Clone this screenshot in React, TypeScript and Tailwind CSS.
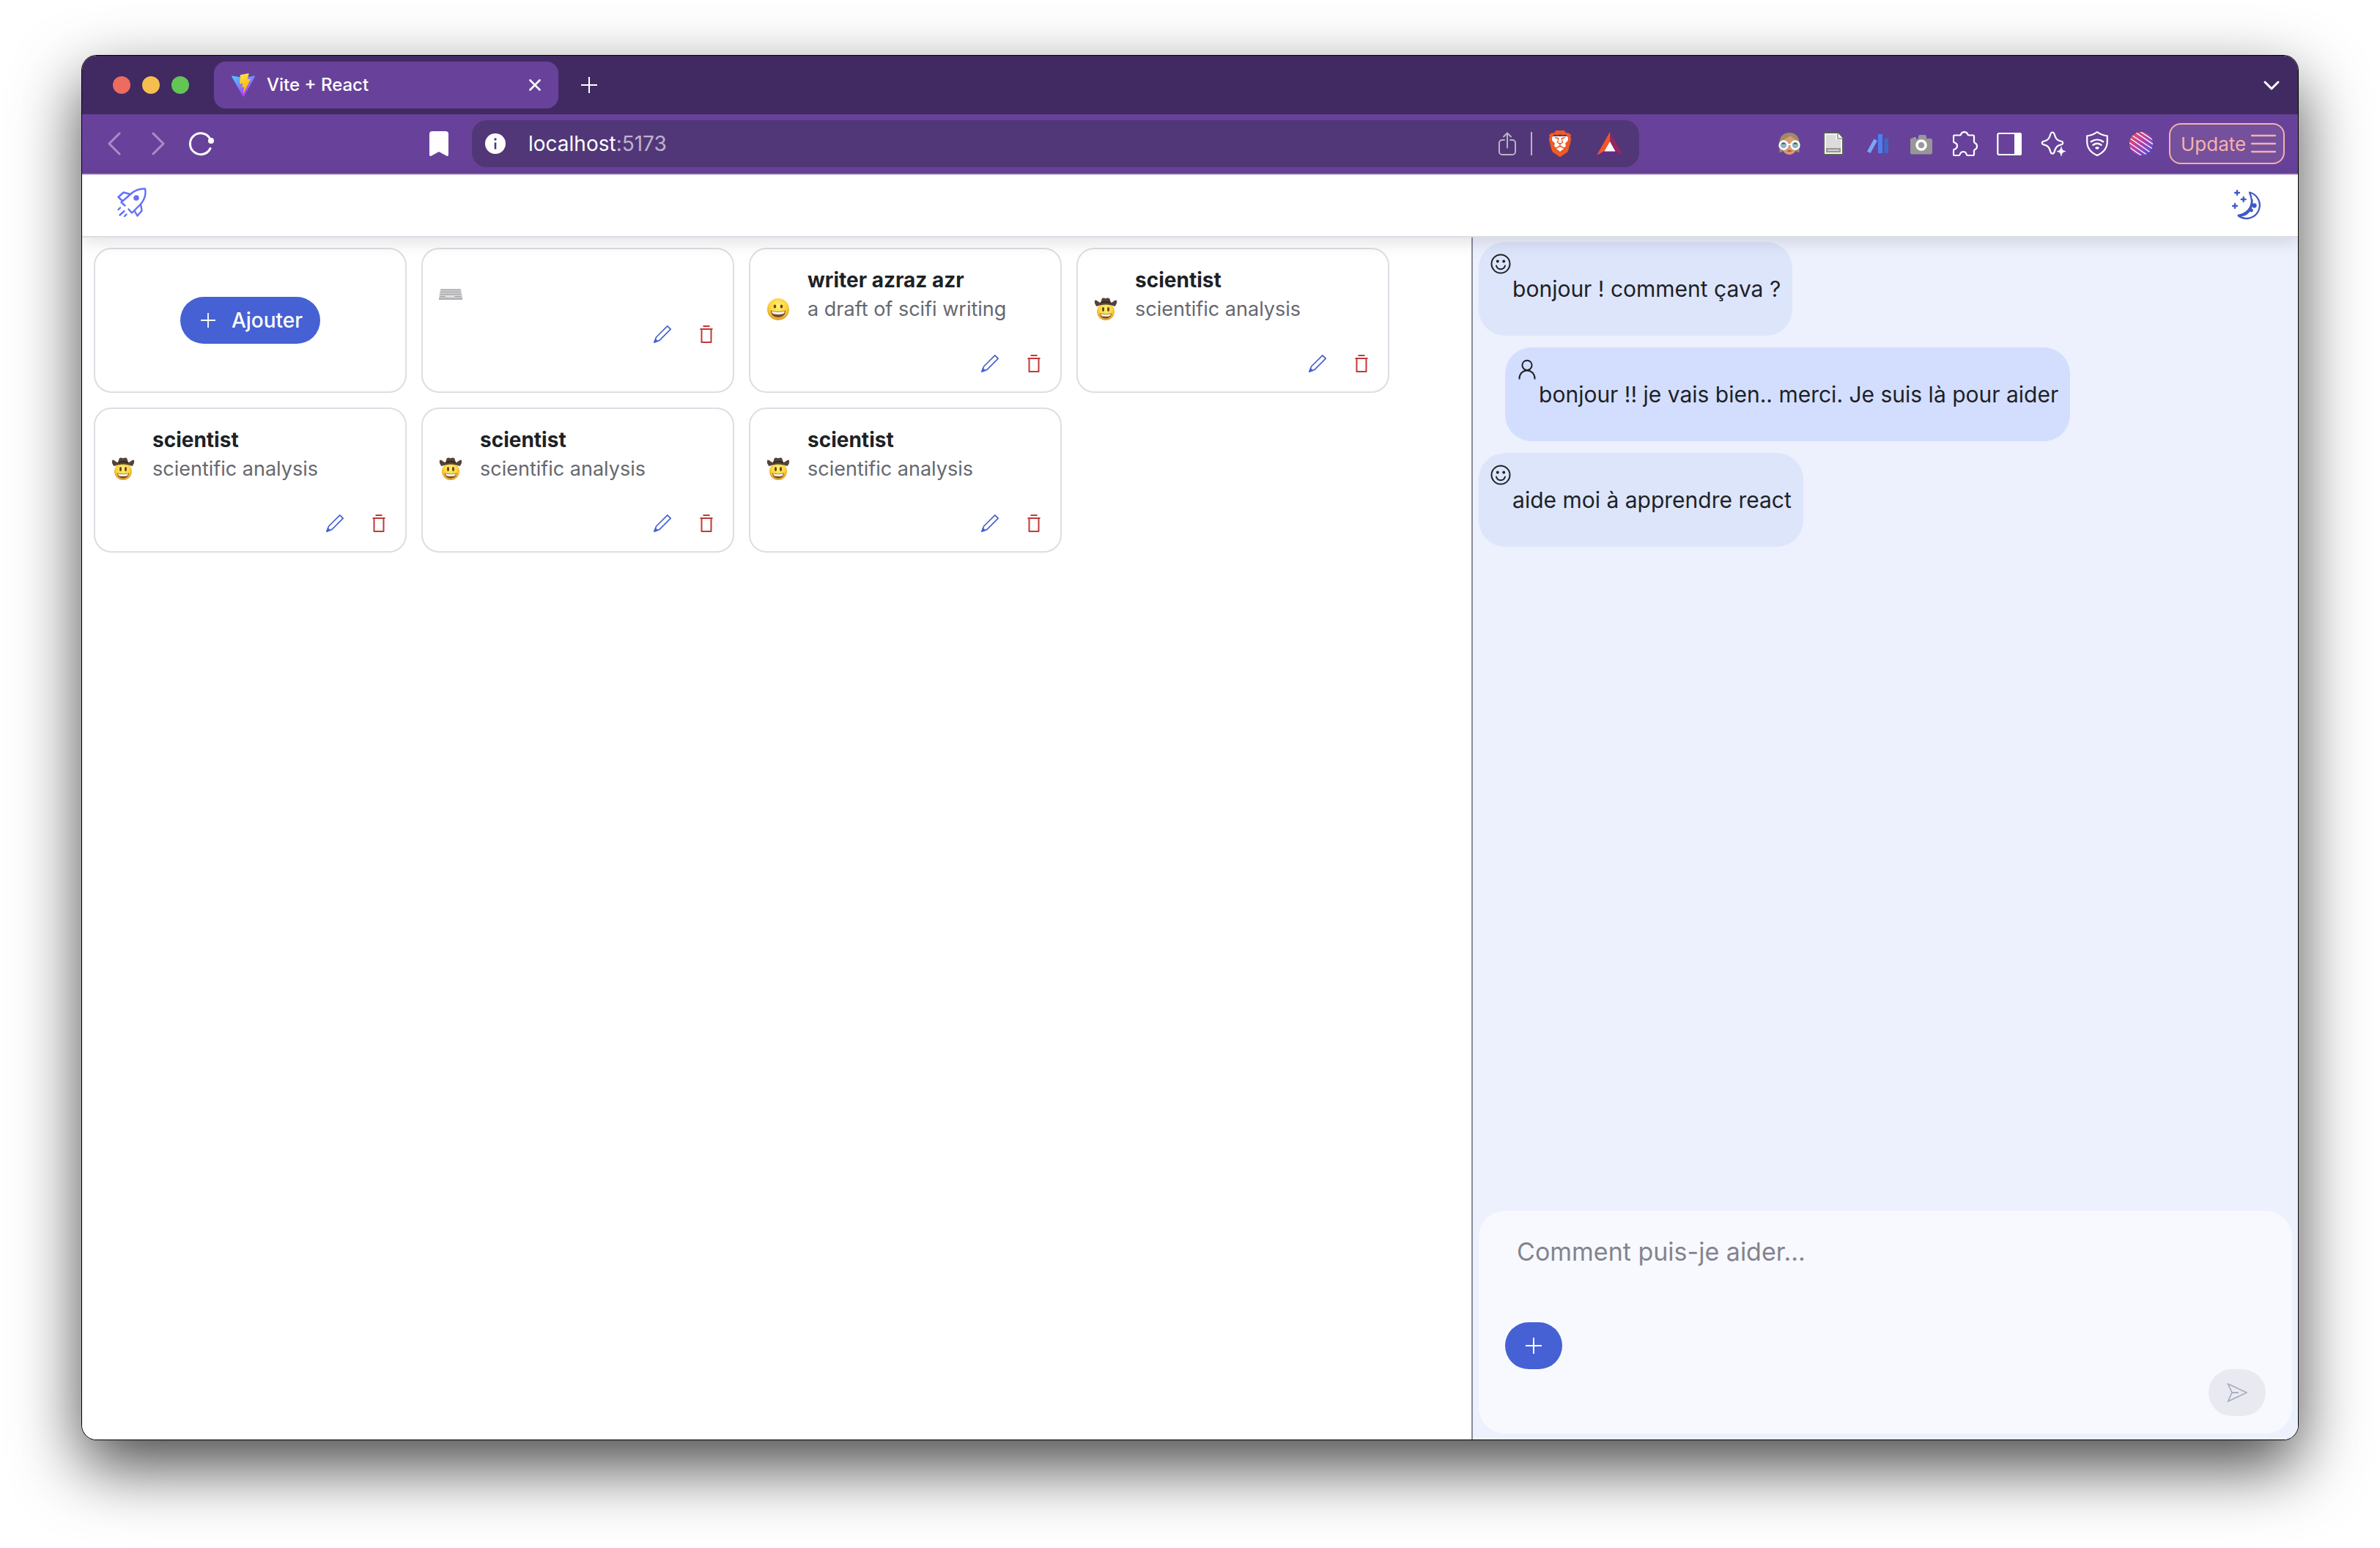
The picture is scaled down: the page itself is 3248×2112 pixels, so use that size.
import type { ReactNode } from "react";
import { SiBrave } from "react-icons/si";

type IconProps = { className?: string };

function ViteLogo() {
  return (
    <svg className="size-8" viewBox="0 0 32 32" aria-hidden="true">
      <defs>
        <linearGradient id="vite-a" x1="0" y1="0" x2="0.6" y2="1">
          <stop offset="0" stopColor="#41d1ff" />
          <stop offset="1" stopColor="#bd34fe" />
        </linearGradient>
        <linearGradient id="vite-b" x1="0.4" y1="0" x2="0.6" y2="1">
          <stop offset="0" stopColor="#ffea83" />
          <stop offset="0.1" stopColor="#ffdd35" />
          <stop offset="1" stopColor="#ffa800" />
        </linearGradient>
      </defs>
      <path fill="url(#vite-a)" d="M31.9 4.6 17 31.3c-.3.6-1.2.6-1.5 0L.2 4.6c-.3-.6.2-1.3.9-1.2L16.100 6.100h.3L31 3.400c.7-.1 1.200.6.900 1.200Z" />
      <path fill="url(#vite-b)" d="m23.200 0-11 2.200c-.2 0-.3.2-.3.400l-.7 11.500c0 .3.200.5.500.400l3.100-.7c.3-.1.500.2.500.5l-.9 4.500c-.1.300.2.600.5.500l1.900-.6c.3-.1.600.200.500.5l-1.400 7c-.1.400.5.700.700.300l.2-.2 9-18c.2-.3-.1-.6-.4-.6l-3.200.6c-.3.100-.6-.2-.5-.5l2-7.200c.1-.3-.2-.6-.5-.6Z" />
    </svg>
  );
}

function FaceIcon() {
  return (
    <svg className="size-8" viewBox="0 0 32 32" aria-hidden="true">
      <path d="M2.500 28V15C2.500 6 8 1 16 1s13.500 5 13.500 14v13l-4-1-2-8h-15l-2 8Z" fill="#a08a63" />
      <path d="M5 14c0-3 6-4 11-8 3-1 5 3 9 5 2 1 2 3 2 5 0 9-5 15-11 15S5 25 5 16Z" fill="#d79b76" />
      <path d="M12 26c2-1.500 6-1.500 8 0-2 1.500-6 1.500-8 0Z" fill="#b1573f" />
      <circle cx="8" cy="18" r="5.500" fill="#8fb5c0" stroke="#fff" strokeWidth="2.400" />
      <circle cx="24" cy="18" r="5.500" fill="#8fb5c0" stroke="#fff" strokeWidth="2.400" />
      <path d="M5 16.500a3.500 3.500 0 0 1 6 0ZM21 16.500a3.500 3.500 0 0 1 6 0Z" fill="#2f5966" />
      <path d="M13 17h6" stroke="#fff" strokeWidth="2" />
    </svg>
  );
}

function DocumentIcon() {
  return (
    <svg className="size-8" viewBox="0 0 32 32" aria-hidden="true">
      <path d="M3 1h19l7 7v23H3Z" fill="#f4f4f4" stroke="#5d5d5d" strokeWidth="2" />
      <path d="M6 4h13v6h7v18H6Z" fill="#dcdcdc" />
      <path d="M22 1v8h7" fill="#fff" stroke="#5d5d5d" strokeWidth="1" />
      <path d="M6 22h20v6H6Z" fill="#969696" />
      <path d="M8 24h16v2H8Z" fill="#cfcfcf" />
    </svg>
  );
}

function BarsIcon() {
  return (
    <svg className="size-8" viewBox="0 0 32 32" aria-hidden="true">
      <path d="M11.500 9.500 16 12 6.500 29 2 26.500Z" fill="#7ba6f7" />
      <path d="M17 3h6v26h-6Z" fill="#4a80f0" />
      <path d="M25.500 9H31v20h-5.500Z" fill="#3c68c8" />
    </svg>
  );
}

function CameraIcon() {
  return (
    <svg className="size-8" viewBox="0 0 32 32" aria-hidden="true">
      <path d="M4 8.500h-1a2 2 0 0 0-2 2V28a2.500 2.500 0 0 0 2.500 2.500h25A2.500 2.500 0 0 0 31 28V11.500A2.500 2.500 0 0 0 28.500 9H23V6.500A2.500 2.500 0 0 0 20.500 4h-6A2.500 2.500 0 0 0 12 6.500V9l-3 1V7H6Z" fill="#979797" />
      <circle cx="16" cy="18" r="6" fill="#999" stroke="#fff" strokeWidth="3.500" />
    </svg>
  );
}

function PuzzleIcon() {
  return (
    <svg className="h-[34px] w-[34px]" viewBox="0 0 34 34" fill="none" stroke="#fff" strokeWidth="2.200" aria-hidden="true">
      <path d="M2.500 5.500H10C11 5.500 11 4.800 11.300 4 12 1.800 13.600 1.200 15.600 1.200S19.500 1.800 20.200 4C20.500 4.800 20.800 5.500 21.600 5.500H27.500Q29 5.500 29 7V14.500C29 15.800 30 16 31 16.500 32.600 17.300 33 18.800 33 20.600S32.400 24 31 24.700C30 25.200 29 25.600 29 26.600V31.500Q29 33 27.500 33H20C19 33 18.800 32 18.500 31 17.900 29 16.500 28 14.500 28S10.700 29 10 31C9.700 32 9.400 33 8.400 33H2.500Q1 33 1 31.500V26C1 25 2 24.800 3 24.400 5 23.600 6 22 6 20S5 16.600 3 15.800C2 15.400 1 15 1 14V7Q1 5.500 2.500 5.500Z" />
    </svg>
  );
}

function SidebarIcon() {
  return (
    <svg className="h-[34px] w-[34px]" viewBox="0 0 34 34" aria-hidden="true">
      <rect x="1.300" y="3" width="31.500" height="29" rx="2" fill="none" stroke="#fff" strokeWidth="2.200" />
      <path d="M24 2h7.500A2.500 2.500 0 0 1 34 4.500v26a2.500 2.500 0 0 1-2.500 2.500H24Z" fill="#fff" />
    </svg>
  );
}

function SparkleIcon() {
  return (
    <svg className="h-[34px] w-[34px]" viewBox="0 0 34 34" aria-hidden="true">
      <path d="M16 1.500c1.800 0 2.300 1.200 2.800 3 1.200 4.300 2.300 6.300 4.700 7.600 1.700 1 3.200 1.200 5 1.800 2.300.700 2.300 3.400 0 4.200-1.800.6-3.300.9-5 1.900-2.400 1.300-3.500 3.300-4.700 7.600-.5 1.800-1 3-2.800 3s-2.300-1.200-2.800-3c-1.200-4.300-2.300-6.300-4.700-7.600-1.700-1-3.200-1.300-5-1.900-2.300-.8-2.300-3.500 0-4.200 1.800-.6 3.300-.8 5-1.800 2.400-1.300 3.500-3.300 4.700-7.600.5-1.800 1-3 2.800-3Z" fill="none" stroke="#fff" strokeWidth="2.200" />
      <path d="M28 21c.8 4.300 2 5.500 6 6.500-4 1-5.200 2.200-6 6.500-.8-4.300-2-5.500-6-6.500 4-1 5.200-2.200 6-6.500Z" fill="#fff" stroke="#fff" strokeWidth="0.600" />
    </svg>
  );
}

function ShieldIcon() {
  return (
    <svg className="h-[34px] w-[34px]" viewBox="0 0 34 34" fill="none" stroke="#fff" strokeWidth="2.200" aria-hidden="true">
      <path d="M17 1.200C13 4 8 6 3.200 6.500V14c0 9.500 5.800 15.500 13.800 19 8-3.500 13.800-9.500 13.800-19V6.500C26 6 21 4 17 1.200Z" />
      <g strokeLinecap="round" strokeWidth="2.400">
        <path d="M8.800 14.300c5-3.600 11.400-3.600 16.400 0M11.500 18.800c3.400-2.600 7.600-2.600 11 0" />
        <path d="M16 22.800h2" strokeWidth="3.200" />
      </g>
    </svg>
  );
}

function StripedIcon() {
  return (
    <svg className="size-8" viewBox="0 0 32 32" aria-hidden="true">
      <defs>
        <linearGradient id="striped" x1="0" y1="0" x2="1" y2="1">
          <stop offset="0" stopColor="#f0504f" />
          <stop offset="0.5" stopColor="#b13fae" />
          <stop offset="1" stopColor="#3a55e8" />
        </linearGradient>
        <clipPath id="striped-clip">
          <circle cx="16" cy="16" r="16" />
        </clipPath>
      </defs>
      <circle cx="16" cy="16" r="16" fill="url(#striped)" />
      <path clipPath="url(#striped-clip)" stroke="#fff" strokeWidth="1.300" d="M14-1l20 13M6-1l28 19M1 3l32 21M0 8l30 21M-1 14l26 18M0 21l16 11" />
    </svg>
  );
}

function BatIcon() {
  return (
    <svg className="h-8 w-9" viewBox="0 0 36 32" aria-hidden="true">
      <path d="M18 0v13l-7 13L0 32Z" fill="#f1562f" />
      <path d="M18 0v13l7 13 11 6Z" fill="#93275f" />
      <path d="M0 32h36l-11-6H11Z" fill="#5f2c87" />
      <path d="M18 13l7.500 13.500h-15Z" fill="#fff" />
    </svg>
  );
}

function BraveIcon() {
  return (
    <span className="grid size-9 place-items-center">
      <svg className="col-start-1 row-start-1 size-9" viewBox="0 0 36 36" aria-hidden="true">
        <path d="M6 8h24l-3 16-9 6-9-6Z" fill="#fff" />
      </svg>
      <SiBrave className="col-start-1 row-start-1 size-9 text-[#f05a24]" />
    </span>
  );
}

function ShareIcon() {
  return (
    <svg className="h-8 w-6" viewBox="0 0 24 32" fill="none" stroke="#b9b3c0" strokeWidth="2" strokeLinecap="round" strokeLinejoin="round" aria-hidden="true">
      <path d="M8 11H5a4 4 0 0 0-4 4v12a4 4 0 0 0 4 4h14a4 4 0 0 0 4-4V15a4 4 0 0 0-4-4h-3M12 21.500V1.500M7 6.500l5-5 5 5" />
    </svg>
  );
}

function ReloadIcon() {
  return (
    <svg className="size-9" viewBox="0 0 36 36" fill="none" aria-hidden="true">
      <path d="M31 24.500A14.500 14.500 0 1 1 30.500 11" stroke="#fff" strokeWidth="3" strokeLinecap="round" />
      <circle cx="32" cy="14" r="4" fill="#fff" />
    </svg>
  );
}

function Chevron({ className, d }: { className: string; d: string }) {
  return (
    <svg className={className} viewBox="0 0 32 32" fill="none" stroke="currentColor" strokeLinecap="round" strokeLinejoin="round" strokeWidth="3" aria-hidden="true">
      <path d={d} />
    </svg>
  );
}

function CloseIcon() {
  return (
    <svg className="size-4" viewBox="0 0 16 16" fill="none" stroke="currentColor" strokeLinecap="round" strokeWidth="2.600" aria-hidden="true">
      <path d="m1.500 1.500 13 13M14.500 1.500l-13 13" />
    </svg>
  );
}

function RocketIcon() {
  return (
    <svg className="size-10" viewBox="0 0 40 40" fill="none" stroke="#6470f8" strokeWidth="2.400" strokeLinecap="round" strokeLinejoin="round" aria-hidden="true">
      <path d="M18 9C24 3.500 30 1 38 1.500 39.500 9 37.500 16 32 22.500L20 34.500 15.500 29.500M18 9 5.500 20 10.500 24.500M18 9 8.500 6.500 1.500 13 7 18M32 22.500 33.500 31.500 27.500 38.500 23.500 31.500" />
      <path d="M1.500 30 4 27.500M3.500 37.500 9.500 32M10 39 12.500 36.500" />
      <circle cx="26" cy="14" r="2.600" fill="#6470f8" />
    </svg>
  );
}

function MoonIcon() {
  return (
    <svg className="h-[42px] w-[42px]" viewBox="0 0 42 42" fill="none" stroke="#3e5bc4" strokeWidth="2.300" strokeLinecap="round" strokeLinejoin="round" aria-hidden="true">
      <path d="M24 3.500A18 18 0 1 1 8.500 35C26 32 30.500 19 24 3.500Z" />
      <path d="M9 35.500C20 36 28 28 27.500 14 27 25 20 32 9 35.500Z" fill="#3e5bc4" />
      <circle cx="30.500" cy="21.500" r="2" fill="#3e5bc4" />
      <circle cx="26.500" cy="28" r="1.300" fill="#3e5bc4" />
      <path d="M7 1v6M4 4h6M15.700 10v6M12.700 13h6M4 19v6M1 22h6" />
    </svg>
  );
}

function PencilIcon() {
  return (
    <svg className="size-7" viewBox="0 0 28 28" fill="none" stroke="#4661d4" strokeWidth="1.700" strokeLinejoin="round" aria-hidden="true">
      <path d="M20.800 2.800 25.200 7.200 10 22.400 3 25 5.600 18Z" />
      <path d="M3 25l1.500-4 2.500 2.500Z" fill="#4661d4" />
    </svg>
  );
}

function TrashIcon() {
  return (
    <svg className="size-7" viewBox="0 0 28 28" fill="none" stroke="#c23934" strokeWidth="2" strokeLinejoin="round" aria-hidden="true">
      <path d="M9.500 3h9M5.500 7h17M7.500 7v18h13V7" />
    </svg>
  );
}

function PlusIcon({ className }: IconProps) {
  return (
    <svg className={className} viewBox="0 0 22 22" fill="none" stroke="currentColor" strokeWidth="2" aria-hidden="true">
      <path d="M11 0v22M0 11h22" />
    </svg>
  );
}

function SmileIcon() {
  return (
    <svg className="size-7" viewBox="0 0 28 28" fill="none" stroke="#1d2226" strokeWidth="2" strokeLinecap="round" aria-hidden="true">
      <circle cx="14" cy="14" r="12.500" />
      <path d="M8 16.500a6.200 6.200 0 0 0 12 0" />
      <circle cx="9.800" cy="10.500" r="1" fill="#1d2226" />
      <circle cx="18.200" cy="10.500" r="1" fill="#1d2226" />
    </svg>
  );
}

function PersonIcon() {
  return (
    <svg className="size-7" viewBox="0 0 28 28" fill="none" stroke="#1d2226" strokeWidth="2" aria-hidden="true">
      <circle cx="14" cy="8.300" r="6.600" />
      <path d="M3.500 27.500V26a10.500 10.500 0 0 1 21 0v1.500" />
    </svg>
  );
}

function SendIcon() {
  return (
    <svg className="size-7" viewBox="0 0 28 28" fill="none" stroke="#a9aec0" strokeWidth="1.800" strokeLinejoin="round" aria-hidden="true">
      <path d="M1.500 2 27 14 1.500 26 7 14ZM7 14h9" />
    </svg>
  );
}

function KeyboardEmoji() {
  return (
    <svg className="h-8 w-8" viewBox="0 0 32 32" role="img" aria-label="keyboard">
      <path d="M2 8h28l2 12v3H0v-3Z" fill="#cfcfd1" />
      <path d="M3 9.500h26M2.600 12.500h27M2.200 15.500h28M2 18.500h28" stroke="#929395" strokeWidth="1.200" strokeDasharray="1.600 0.600" />
      <path d="M0 20.500h32V23H0Z" fill="#b0b0b2" />
      <path d="M9 18.500h12" stroke="#e8e8e8" strokeWidth="1.600" />
    </svg>
  );
}

function FaceGradient({ id }: { id: string }) {
  return (
    <radialGradient id={id} cx="0.5" cy="0.35" r="0.65">
      <stop offset="0" stopColor="#fff27a" />
      <stop offset="0.6" stopColor="#fdd33c" />
      <stop offset="1" stopColor="#e2962a" />
    </radialGradient>
  );
}

function GrinEmoji() {
  return (
    <svg className="h-8 w-8" viewBox="0 0 32 32" role="img" aria-label="grinning face">
      <defs>
        <FaceGradient id="grin" />
      </defs>
      <circle cx="16" cy="16" r="15" fill="url(#grin)" />
      <ellipse cx="11.500" cy="12" rx="1.800" ry="2.600" fill="#6b4315" />
      <ellipse cx="20.500" cy="12" rx="1.800" ry="2.600" fill="#6b4315" />
      <path d="M6 17.500c6 2 14 2 20 0 0 6-4 9.500-10 9.500S6 23.500 6 17.500Z" fill="#77501f" />
      <path d="M7 18.500c6 1.700 12 1.700 18 0-.3 2.500-1.500 3.500-3 3.800-4 .8-8 .8-12 0-1.500-.3-2.700-1.300-3-3.800Z" fill="#fff" />
    </svg>
  );
}

function CowboyEmoji() {
  return (
    <svg className="h-8 w-8" viewBox="0 0 32 32" role="img" aria-label="cowboy">
      <defs>
        <FaceGradient id="cowboy" />
      </defs>
      <circle cx="16" cy="19" r="12" fill="url(#cowboy)" />
      <ellipse cx="12.500" cy="16" rx="1.500" ry="3" fill="#6b4315" />
      <ellipse cx="19.500" cy="16" rx="1.500" ry="3" fill="#6b4315" />
      <path d="M8 21.500c5 1.500 11 1.500 16 0-.5 4.500-3.500 7-8 7s-7.500-2.500-8-7Z" fill="#77501f" />
      <path d="M9 22.300c5 1.200 9 1.200 14 0-.5 2.500-1.500 3-3 3.200-2.500.4-5.500.4-8 0-1.500-.2-2.500-.7-3-3.200Z" fill="#fff" />
      <path d="M1.500 3.500C.2 5 .8 9 3.500 12c7-3.500 18-3.500 25 0 2.700-3 3.300-7 2-8.500-2.500-.5-4.500 3-7.500 3.500L21.500 2c-.8-1.600-3-1.800-5.500-.8-2.500-1-4.700-.8-5.500.8L9 7C6 6.500 4 3 1.500 3.500Z" fill="#54433a" />
      <path d="M9 7c4-1.500 10-1.500 14 0" stroke="#2e241f" strokeWidth="1.500" fill="none" />
    </svg>
  );
}

type Agent = { title?: string; description?: string; emoji: ReactNode };

const agents: Agent[] = [
  { emoji: <KeyboardEmoji /> },
  { title: "writer azraz azr", description: "a draft of scifi writing", emoji: <GrinEmoji /> },
  { title: "scientist", description: "scientific analysis", emoji: <CowboyEmoji /> },
  { title: "scientist", description: "scientific analysis", emoji: <CowboyEmoji /> },
  { title: "scientist", description: "scientific analysis", emoji: <CowboyEmoji /> },
  { title: "scientist", description: "scientific analysis", emoji: <CowboyEmoji /> },
];

const messages = [
  { from: "user", text: "bonjour ! comment çava ?" },
  { from: "assistant", text: "bonjour !! je vais bien.. merci. Je suis là pour aider" },
  { from: "user", text: "aide moi à apprendre react" },
];

function AgentCard({ title, description, emoji }: Agent) {
  return (
    <article className="h-[198px] rounded-3xl border-2 border-[#dddde5] bg-white px-[22px] pt-[22px]">
      <div className="flex items-center gap-6">
        {emoji}
        <div className={title ? "h-[120px] leading-10" : "h-20"}>
          {title && <h2 className="text-[28px] leading-10 font-bold text-[#1d2226]">{title}</h2>}
          {description && <p className="text-[27px] leading-10 text-[#65686f]">{description}</p>}
        </div>
      </div>
      <div className="flex justify-end gap-8">
        <button type="button" aria-label="Modifier"><PencilIcon /></button>
        <button type="button" aria-label="Supprimer"><TrashIcon /></button>
      </div>
    </article>
  );
}

function Message({ from, text }: { from: string; text: string }) {
  const user = from === "user";
  return (
    <li
      className={
        user
          ? "flex h-32 w-fit items-start rounded-[36px] bg-[#dde5fb] px-4 pt-4"
          : "ml-9 flex h-32 w-fit items-start rounded-[36px] bg-[#d3deff] px-4 pt-4"
      }
    >
      <span className="w-7 shrink-0">{user ? <SmileIcon /> : <PersonIcon />}</span>
      <p className="pt-7 pl-0.5 text-[30px] leading-10 text-[#1d2226]">{text}</p>
    </li>
  );
}

function TabBar() {
  return (
    <div className="flex h-20 items-center bg-[#412a62] pr-5 pl-[42px] text-white">
      <div className="flex gap-4">
        <span className="size-6 rounded-full bg-[#ed6b5f]" />
        <span className="size-6 rounded-full bg-[#f5bf4f]" />
        <span className="size-6 rounded-full bg-[#62c655]" />
      </div>
      <div className="ml-[34px] flex h-16 w-[470px] items-center rounded-2xl bg-[#68429a] px-6">
        <ViteLogo />
        <span className="ml-4 flex-1 text-2xl font-medium">Vite + React</span>
        <button type="button" aria-label="Close tab">
          <CloseIcon />
        </button>
      </div>
      <button type="button" aria-label="New tab" className="ml-[31px]">
        <PlusIcon className="h-[22px] w-[22px]" />
      </button>
      <button type="button" aria-label="Search tabs" className="ml-auto">
        <Chevron className="size-8" d="M7 12l9 9 9-9" />
      </button>
    </div>
  );
}

function Toolbar() {
  return (
    <div className="flex h-[82px] items-center border-b-2 border-[#8767b0] bg-[#68429a] pr-[18px] pl-7">
      <div className="flex w-[504px] shrink-0 items-center text-[#a78fc8]">
        <button type="button" aria-label="Back"><Chevron className="size-8" d="M23 2 9 16l14 14" /></button>
        <button type="button" aria-label="Forward" className="ml-7"><Chevron className="size-8" d="M9 2l14 14L9 30" /></button>
        <button type="button" aria-label="Reload" className="ml-6"><ReloadIcon /></button>
        <button type="button" aria-label="Bookmark" className="mr-8 ml-auto">
          <svg className="h-[34px] w-[26px]" viewBox="0 0 26 34" fill="#fff" aria-hidden="true">
            <path d="M4 0h18a4 4 0 0 1 4 4v28c0 1.800-1.500 2.500-2.800 1.400L13 28 2.800 33.400C1.500 34.500 0 33.800 0 32V4a4 4 0 0 1 4-4Z" />
          </svg>
        </button>
      </div>
      <div className="flex h-16 w-[53.5%] items-center rounded-[20px] bg-[#513778] pr-[22px] pl-[18px]">
        <svg className="size-7 shrink-0" viewBox="0 0 28 28" aria-hidden="true">
          <circle cx="14" cy="14" r="14" fill="#fff" />
          <path d="M14 12.500v9" stroke="#513778" strokeWidth="2.600" />
          <circle cx="14" cy="8" r="1.700" fill="#513778" />
        </svg>
        <p className="ml-[31px] flex-1 text-[28px] leading-9 text-white">
          localhost<span className="text-[#bfb3cd]">:5173</span>
        </p>
        <button type="button" aria-label="Share"><ShareIcon /></button>
        <span className="mx-5 h-8 w-0.5 bg-[#b9b3c0]" />
        <button type="button" aria-label="Brave Shields" className="mr-8"><BraveIcon /></button>
        <button type="button" aria-label="Brave Rewards"><BatIcon /></button>
      </div>
      <div className="flex flex-1 items-center justify-end">
        {[FaceIcon, DocumentIcon, BarsIcon, CameraIcon, PuzzleIcon, SidebarIcon, SparkleIcon, ShieldIcon, StripedIcon].map((Icon, i) => (
          <button key={i} type="button" aria-label={`Extension ${i + 1}`} className="flex w-[60px] justify-center">
            <Icon />
          </button>
        ))}
        <button type="button" className="ml-2 flex h-14 w-[158px] items-center justify-between rounded-2xl border-2 border-[#f6b1ac] bg-[#75509c] pr-2.5 pl-3.5 text-[26px] text-[#f6b1ac]">
          Update
          <svg className="h-[26px] w-[34px]" viewBox="0 0 34 26" stroke="currentColor" strokeWidth="2.400" aria-hidden="true">
            <path d="M1 2h32M1 13h32M1 24h32" strokeLinecap="round" />
          </svg>
        </button>
      </div>
    </div>
  );
}

export default function App() {
  return (
    <div className="flex h-screen flex-col bg-white px-28 pt-[76px] pb-[148px] font-['Inter',sans-serif]">
      <div className="flex min-h-0 flex-1 flex-col overflow-hidden rounded-[20px] shadow-[0_0_0_1px_#000,0_36px_90px_rgba(0,0,0,0.72)]">
        <TabBar />
        <Toolbar />
        <header className="relative z-10 flex h-[86px] items-center justify-between border-b-2 border-[#dddde5] bg-white px-12 shadow-[0_4px_24px_rgba(0,0,0,0.14)]">
          <a href="#" aria-label="Accueil" className="mb-2"><RocketIcon /></a>
          <button type="button" aria-label="Mode sombre"><MoonIcon /></button>
        </header>
        <div className="flex min-h-0 flex-1 bg-white">
          <main className="w-[62.7%] pt-3.5 pr-28 pl-4">
            <div className="grid grid-cols-4 gap-5">
              <div className="flex h-[198px] items-center justify-center rounded-3xl border-2 border-[#dddde5] bg-white">
                <button type="button" className="flex h-16 items-center gap-[22px] rounded-full bg-[#4661d4] pr-6 pl-7 text-[28px] font-medium text-white">
                  <PlusIcon className="size-5" />
                  Ajouter
                </button>
              </div>
              {agents.map((agent, i) => (
                <AgentCard key={i} {...agent} />
              ))}
            </div>
          </main>
          <aside className="flex flex-1 flex-col border-l-2 border-[#8a8c9b] bg-[#edf1fd] px-2 pt-1.5 pb-2">
            <ul className="flex flex-1 flex-col gap-4">
              {messages.map((message, i) => (
                <Message key={i} {...message} />
              ))}
            </ul>
            <form className="rounded-[36px] bg-[#f8f9fe] px-9 py-6">
              <textarea
                aria-label="Message"
                placeholder="Comment puis-je aider..."
                className="block h-32 w-full resize-none bg-transparent px-4 pt-3 text-[34px] leading-10 text-[#1d2226] outline-none placeholder:text-[#83848f]"
              />
              <button type="button" aria-label="Ajouter un fichier" className="flex h-16 w-[78px] items-center justify-center rounded-full bg-[#4661d4] text-white">
                <PlusIcon className="h-[22px] w-[22px]" />
              </button>
              <button type="submit" disabled aria-label="Envoyer" className="ml-auto flex h-16 w-[78px] items-center justify-center rounded-full bg-[#e9eaf1]">
                <SendIcon />
              </button>
            </form>
          </aside>
        </div>
      </div>
    </div>
  );
}
